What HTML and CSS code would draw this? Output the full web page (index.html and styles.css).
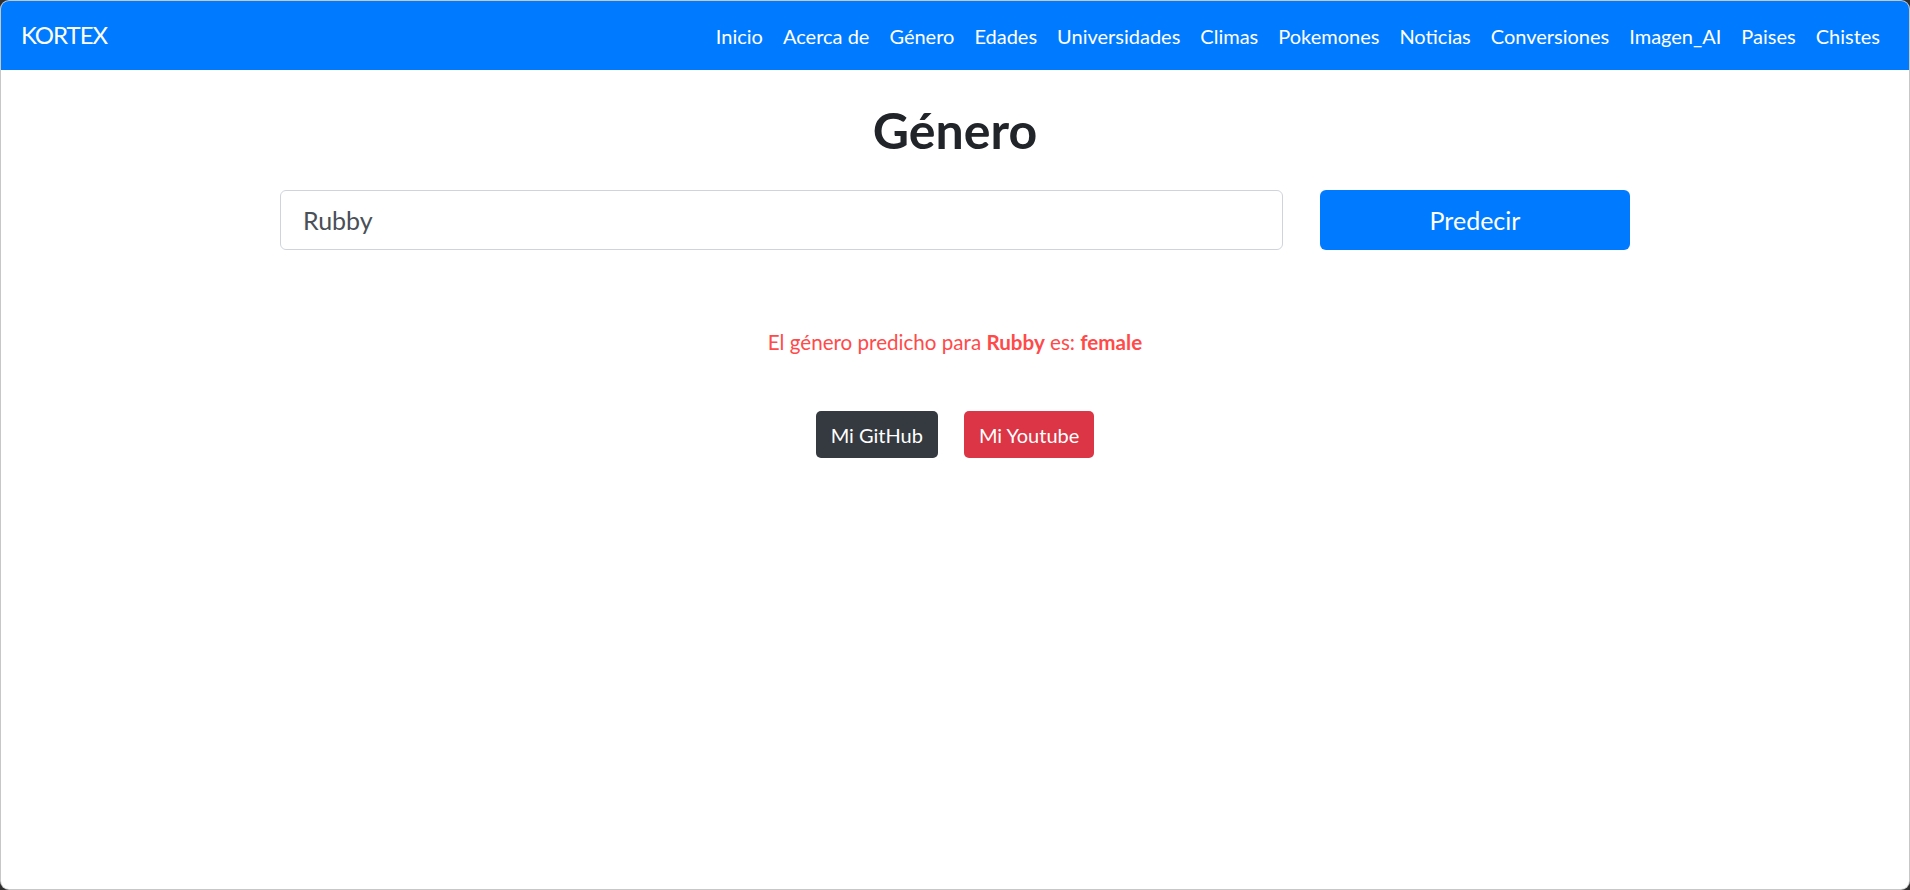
FILE: index.html
```html
<!DOCTYPE html>
<html lang="es">
<head>
<meta charset="utf-8">
<title>Género</title>
<link rel="stylesheet" href="styles.css">
</head>
<body>
<div class="window">
  <nav class="navbar">
    <a class="brand" href="#">KORTEX</a>
    <ul class="nav">
      <li><a href="#">Inicio</a></li>
      <li><a href="#">Acerca de</a></li>
      <li><a href="#">Género</a></li>
      <li><a href="#">Edades</a></li>
      <li><a href="#">Universidades</a></li>
      <li><a href="#">Climas</a></li>
      <li><a href="#">Pokemones</a></li>
      <li><a href="#">Noticias</a></li>
      <li><a href="#">Conversiones</a></li>
      <li><a href="#">Imagen_AI</a></li>
      <li><a href="#">Paises</a></li>
      <li><a href="#">Chistes</a></li>
    </ul>
  </nav>
  <main class="container">
    <h1 class="title">Género</h1>
    <form class="predict-form">
      <input class="name-input" type="text" value="Rubby">
      <button class="btn-predict" type="button">Predecir</button>
    </form>
    <p class="result">El género predicho para <strong>Rubby</strong> es: <strong>female</strong></p>
    <div class="links">
      <a class="btn btn-dark" href="#">Mi GitHub</a>
      <a class="btn btn-red" href="#">Mi Youtube</a>
    </div>
  </main>
</div>
</body>
</html>
```
FILE: styles.css
```css
* { box-sizing: border-box; }
html, body { margin: 0; height: 100%; }
body {
  background: #2f2f2f;
  font-family: "Lato", "Open Sans", sans-serif;
  font-size: 20px;
  line-height: 1.5;
  color: #212529;
}
.window {
  height: 100vh;
  background: #fff;
  border: 1px solid rgba(0, 0, 0, 0.22);
  border-radius: 9px;
  overflow: hidden;
}
.navbar {
  height: 69px;
  background: #007bff;
  display: flex;
  align-items: center;
  justify-content: space-between;
  padding: 0 19px 0 20px;
}
.brand {
  color: #fff;
  text-decoration: none;
  font-size: 24px;
  letter-spacing: -1px;
  line-height: 1;
  margin-top: -1px;
}
.nav {
  display: flex;
  list-style: none;
  margin: 0;
  padding: 0;
}
.nav a {
  display: block;
  padding: 10px 10px;
  color: #fff;
  text-decoration: none;
  font-size: 20px;
  line-height: 30px;
}
.container {
  width: 1350px;
  margin: 0 auto;
}
.title {
  margin: 30px 0 30px;
  font-size: 50px;
  line-height: 60px;
  font-weight: 700;
  text-align: center;
  color: #212529;
}
.predict-form {
  display: grid;
  grid-template-columns: 1fr 310px;
  gap: 37px;
  height: 60px;
}
.name-input {
  height: 60px;
  border: 1px solid #ced4da;
  border-radius: 6px;
  padding: 0 22px;
  font-family: inherit;
  font-size: 25px;
  color: #495057;
  background: #fff;
}
.btn-predict {
  height: 60px;
  border: none;
  border-radius: 6px;
  background: #007bff;
  color: #fff;
  font-family: inherit;
  font-size: 25px;
}
.result {
  margin: 77px 0 0;
  text-align: center;
  color: #ff4a4a;
  font-size: 20.6px;
  line-height: 30px;
}
.result strong { font-weight: 700; }
.links {
  margin-top: 54px;
  display: flex;
  justify-content: center;
  gap: 26px;
}
.btn {
  display: inline-flex;
  align-items: center;
  height: 47px;
  padding: 0 15px;
  border-radius: 5px;
  color: #fff;
  text-decoration: none;
  font-size: 20px;
}
.btn-dark { background: #343a40; }
.btn-red { background: #dc3545; }
```
